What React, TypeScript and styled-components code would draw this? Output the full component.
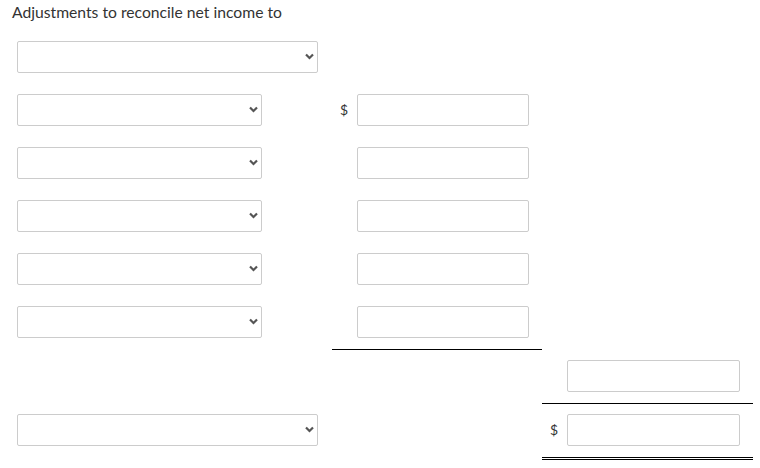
import React from 'react';
import styled, { createGlobalStyle } from 'styled-components';

const GlobalStyle = createGlobalStyle`
	body {
		margin: 0;
		background: #fff;
		font-family: Lato, "Liberation Sans", sans-serif;
		color: #333;
	}
`;

const Sheet = styled.div`
	width: 760px;
	padding-left: 12px;
	box-sizing: border-box;
`;

const Title = styled.div`
	height: 31px;
	padding-top: 2px;
	box-sizing: border-box;
	font-size: 15.7px;
	line-height: 20px;
	color: #333;
`;

const Row = styled.div`
	display: grid;
	grid-template-columns: 320px 210px 211px;
`;

const Cell = styled.div<{ $rule?: 'single' | 'double'; $pad?: number }>`
	display: flex;
	align-items: flex-start;
	height: 43px;
	padding-top: 10px;
	padding-left: ${({ $pad }) => $pad ?? 0}px;
	box-sizing: content-box;
	border-bottom: ${({ $rule }) =>
		$rule === 'single' ? '1px solid #000' : $rule === 'double' ? '3px double #000' : 'none'};
`;

const Inner = styled.div`
	display: flex;
	align-items: center;
	height: 32px;
`;

const SelectWrap = styled.div<{ $wide?: boolean }>`
	position: relative;
	width: ${({ $wide }) => ($wide ? 301 : 245)}px;
	height: 32px;
`;

const Select = styled.select`
	appearance: none;
	width: 100%;
	height: 100%;
	border: 1px solid #ccc;
	border-radius: 2px;
	background: #fff;
	box-sizing: border-box;
	font-family: Lato, "Liberation Sans", sans-serif;
	font-size: 14px;
`;

const Chevron = styled.svg`
	position: absolute;
	right: 4px;
	top: 12px;
	pointer-events: none;
`;

const Dollar = styled.span`
	width: 17px;
	font-size: 14px;
	color: #333;
	line-height: 32px;
`;

const Field = styled.input<{ $w: number }>`
	width: ${({ $w }) => $w}px;
	height: 32px;
	box-sizing: border-box;
	border: 1px solid #ccc;
	border-radius: 2px;
	background: #fff;
	padding: 0 6px;
	font-family: Lato, "Liberation Sans", sans-serif;
	font-size: 14px;
`;

function Dropdown({ wide }: { wide?: boolean }) {
	return (
		<SelectWrap $wide={wide}>
			<Select defaultValue="">
				<option value=""></option>
			</Select>
			<Chevron width="9" height="7" viewBox="0 0 9 7">
				<path d="M1 1.5 L4.5 5 L8 1.5" fill="none" stroke="#555" strokeWidth="2.2" />
			</Chevron>
		</SelectWrap>
	);
}

const middleRows = [true, false, false, false, false];

export default function App() {
	return (
		<>
			<GlobalStyle />
			<Sheet>
				<Title>Adjustments to reconcile net income to</Title>
				<Row>
					<Cell $pad={5}>
						<Dropdown wide />
					</Cell>
					<Cell />
					<Cell />
				</Row>
				{middleRows.map((withDollar, i) => (
					<Row key={i}>
						<Cell $pad={5}>
							<Dropdown />
						</Cell>
						<Cell $pad={8} $rule={i === middleRows.length - 1 ? 'single' : undefined}>
							<Inner>
								<Dollar>{withDollar ? '$' : ''}</Dollar>
								<Field $w={172} />
							</Inner>
						</Cell>
						<Cell />
					</Row>
				))}
				<Row>
					<Cell />
					<Cell />
					<Cell $pad={8} $rule="single">
						<Inner>
							<Dollar />
							<Field $w={173} />
						</Inner>
					</Cell>
				</Row>
				<Row>
					<Cell $pad={5}>
						<Dropdown wide />
					</Cell>
					<Cell />
					<Cell $pad={8} $rule="double">
						<Inner>
							<Dollar>$</Dollar>
							<Field $w={173} />
						</Inner>
					</Cell>
				</Row>
			</Sheet>
		</>
	);
}
